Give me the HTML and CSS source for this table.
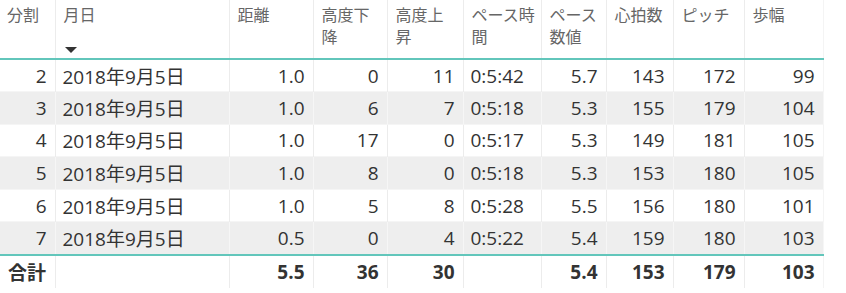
FILE: index.html
```html
<!DOCTYPE html>
<html lang="ja">
<head>
<meta charset="utf-8">
<link rel="stylesheet" href="styles.css">
</head>
<body>
<table class="grid">
  <colgroup>
    <col class="c1"><col class="c2"><col class="c3"><col class="c4"><col class="c5">
    <col class="c6"><col class="c7"><col class="c8"><col class="c9"><col class="c10">
  </colgroup>
  <thead>
    <tr>
      <th>分割</th>
      <th><div class="hwrap">月日<span class="sort"></span></div></th>
      <th>距離</th>
      <th>高度下<br>降</th>
      <th>高度上<br>昇</th>
      <th>ペース時<br>間</th>
      <th>ペース<br>数値</th>
      <th>心拍数</th>
      <th>ピッチ</th>
      <th>歩幅</th>
    </tr>
  </thead>
  <tbody>
    <tr class="odd"><td>2</td><td class="l">2018年9月5日</td><td>1.0</td><td>0</td><td>11</td><td class="l">0:5:42</td><td>5.7</td><td>143</td><td>172</td><td>99</td></tr>
    <tr class="even"><td>3</td><td class="l">2018年9月5日</td><td>1.0</td><td>6</td><td>7</td><td class="l">0:5:18</td><td>5.3</td><td>155</td><td>179</td><td>104</td></tr>
    <tr class="odd"><td>4</td><td class="l">2018年9月5日</td><td>1.0</td><td>17</td><td>0</td><td class="l">0:5:17</td><td>5.3</td><td>149</td><td>181</td><td>105</td></tr>
    <tr class="even"><td>5</td><td class="l">2018年9月5日</td><td>1.0</td><td>8</td><td>0</td><td class="l">0:5:18</td><td>5.3</td><td>153</td><td>180</td><td>105</td></tr>
    <tr class="odd"><td>6</td><td class="l">2018年9月5日</td><td>1.0</td><td>5</td><td>8</td><td class="l">0:5:28</td><td>5.5</td><td>156</td><td>180</td><td>101</td></tr>
    <tr class="even"><td>7</td><td class="l">2018年9月5日</td><td>0.5</td><td>0</td><td>4</td><td class="l">0:5:22</td><td>5.4</td><td>159</td><td>180</td><td>103</td></tr>
  </tbody>
  <tfoot>
    <tr><td class="l">合計</td><td></td><td>5.5</td><td>36</td><td>30</td><td></td><td>5.4</td><td>153</td><td>179</td><td>103</td></tr>
  </tfoot>
</table>
</body>
</html>
```
FILE: styles.css
```css
html, body {
  margin: 0;
  padding: 0;
  background: #ffffff;
}

.grid {
  border-collapse: collapse;
  table-layout: fixed;
  width: 823px;
  font-family: "Open Sans", "Noto Sans CJK JP", sans-serif;
  color: #333333;
}

.c1 { width: 55px; }
.c2 { width: 174px; }
.c3 { width: 84px; }
.c4 { width: 74px; }
.c5 { width: 76px; }
.c6 { width: 78px; }
.c7 { width: 65px; }
.c8 { width: 67px; }
.c9 { width: 71px; }
.c10 { width: 79px; }

.grid th {
  height: 58px;
  padding: 4px 6px 0 8px;
  box-sizing: border-box;
  vertical-align: top;
  text-align: left;
  font-weight: normal;
  font-size: 16px;
  line-height: 22px;
  color: #666666;
  border-right: 1px solid #ececec;
  border-bottom: 2px solid #62c6bb;
  white-space: nowrap;
  overflow: hidden;
}

.grid th:first-child {
  padding-left: 7px;
}

.grid th:last-child,
.grid td:last-child {
  border-right: 1px solid #f4f4f4;
}

.hwrap {
  position: relative;
  height: 54px;
}

.sort {
  position: absolute;
  left: 1px;
  top: 43px;
  width: 0;
  height: 0;
  border-left: 6px solid transparent;
  border-right: 6px solid transparent;
  border-top: 6px solid #333333;
}

.grid td {
  height: 32.6px;
  padding: 0 8px 0 8px;
  box-sizing: border-box;
  font-size: 19px;
  text-align: right;
  vertical-align: middle;
  white-space: nowrap;
  overflow: hidden;
  border-right: 1px solid #ececec;
}

.grid td.l {
  text-align: left;
  padding-left: 7px;
}

.grid tbody tr.even td {
  background: #eeeeee;
  border-right-color: #f6f6f6;
  border-top: 1px solid #f5f5f5;
  border-bottom: 1px solid #f5f5f5;
}

.grid tfoot td {
  height: 33px;
  font-weight: bold;
  border-top: 2px solid #62c6bb;
}

.grid tfoot td.l {
  padding-left: 8px;
}
```
